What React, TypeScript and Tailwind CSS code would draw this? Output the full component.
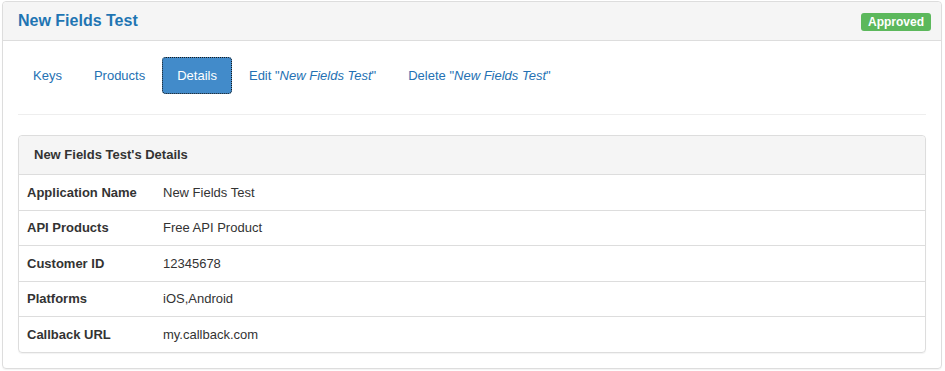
import React from 'react';

const rows = [
  { label: 'Application Name', value: 'New Fields Test', h: 'h-[36px]' },
  { label: 'API Products', value: 'Free API Product', h: 'h-[35px]' },
  { label: 'Customer ID', value: '12345678', h: 'h-[36px]' },
  { label: 'Platforms', value: 'iOS,Android', h: 'h-[35px]' },
  { label: 'Callback URL', value: 'my.callback.com', h: 'h-[35px]' },
];

const App = () => {
  return (
    <div className="min-h-screen bg-white pl-[2px] pt-[1px] text-[13px] text-[#333] font-['Liberation_Sans',Arial,sans-serif]">
      <div className="w-[940px] rounded-[4px] border border-[#dddddd] shadow-[0_1px_1px_rgba(0,0,0,0.05)]">
        {/* Header */}
        <div className="flex h-[39px] items-center justify-between border-b border-[#dddddd] bg-[#f5f5f5] pl-[15px] pr-[10px] rounded-t-[4px]">
          <h1 className="text-[16px] font-bold text-[#1f75b3]">New Fields Test</h1>
          <span className="mt-[1px] rounded-[3px] bg-[#5cb85c] px-[7px] py-[2px] text-[12px] font-bold leading-[14px] text-white">
            Approved
          </span>
        </div>

        {/* Body */}
        <div className="px-[15px] pt-[16px] pb-[15px]">
          <nav className="flex gap-[2px]">
            <a className="flex h-[37px] items-center rounded-[4px] px-[15px] text-[#2571b3]">Keys</a>
            <a className="flex h-[37px] items-center rounded-[4px] px-[15px] text-[#2571b3]">Products</a>
            <a className="flex h-[37px] items-center rounded-[4px] bg-[#428bca] px-[15px] text-white outline-1 outline-dotted outline-[#1a1a1a] -outline-offset-1">
              Details
            </a>
            <a className="flex h-[37px] items-center rounded-[4px] px-[15px] text-[#2571b3]">
              Edit "<em>New Fields Test</em>"
            </a>
            <a className="flex h-[37px] items-center rounded-[4px] px-[15px] text-[#2571b3]">
              Delete "<em>New Fields Test</em>"
            </a>
          </nav>

          <hr className="my-[20px] border-t border-[#eeeeee]" />

          {/* Details panel */}
          <div className="rounded-[4px] border border-[#dddddd] shadow-[0_1px_1px_rgba(0,0,0,0.05)]">
            <div className="flex h-[39px] items-center border-b border-[#dddddd] bg-[#f5f5f5] px-[15px] rounded-t-[4px] font-bold">
              New Fields Test's Details
            </div>
            {rows.map((row, i) => (
              <div
                key={row.label}
                className={`flex items-center ${row.h} ${i < rows.length - 1 ? 'border-b border-[#dddddd]' : ''}`}
              >
                <div className="w-[136px] pl-[8px] font-bold">{row.label}</div>
                <div className="pl-[8px]">{row.value}</div>
              </div>
            ))}
          </div>
        </div>
      </div>
    </div>
  );
};

export default App;
